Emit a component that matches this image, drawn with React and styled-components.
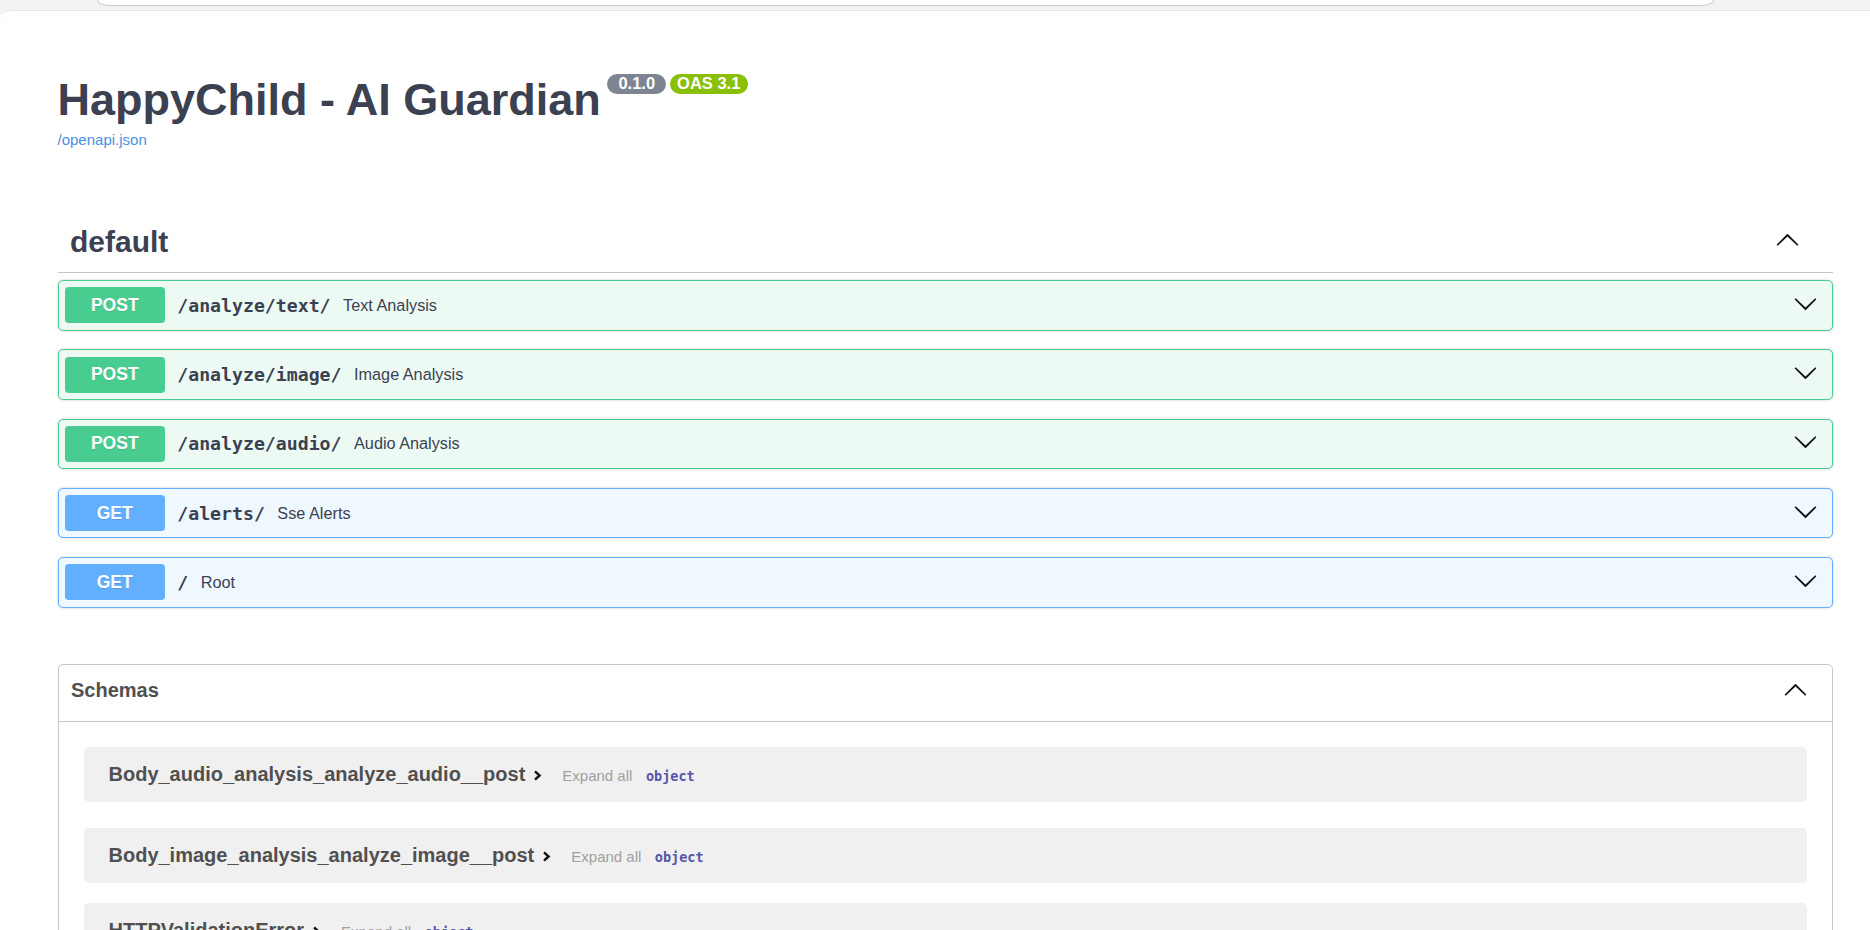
import React from 'react';
import styled, { createGlobalStyle } from 'styled-components';

const GlobalStyle = createGlobalStyle`
  html, body {
    margin: 0;
    padding: 0;
    overflow: hidden;
  }
  body {
    background: #f3f3f3;
    font-family: "Liberation Sans", Arial, sans-serif;
    color: #3b4151;
  }
  * { box-sizing: border-box; }
`;

const METHOD_COLORS = {
  POST: { main: '#49cc90', bg: '#edfaf4' },
  GET: { main: '#61affe', bg: '#eff7ff' },
};

const operations = [
  { method: 'POST', path: '/analyze/text/', summary: 'Text Analysis' },
  { method: 'POST', path: '/analyze/image/', summary: 'Image Analysis' },
  { method: 'POST', path: '/analyze/audio/', summary: 'Audio Analysis' },
  { method: 'GET', path: '/alerts/', summary: 'Sse Alerts' },
  { method: 'GET', path: '/', summary: 'Root' },
];

const schemas = [
  { name: 'Body_audio_analysis_analyze_audio__post', space: 25 },
  { name: 'Body_image_analysis_analyze_image__post', space: 25.5 },
  { name: 'HTTPValidationError', space: 19.5 },
  { name: 'ValidationError', space: 19.5 },
];

const Chevron = ({ up }) => (
  <ArrowIcon viewBox="0 0 20 20" $up={up}>
    <path d="M17.418 6.109c.272-.268.709-.268.979 0s.271.701 0 .969l-7.908 7.83c-.27.268-.707.268-.979 0l-7.908-7.83c-.27-.268-.27-.701 0-.969.271-.268.709-.268.979 0L10 13.25l7.418-7.141z" />
  </ArrowIcon>
);

const App = () => {
  return (
    <>
      <GlobalStyle />
      <TopStrip>
        <AddressBar />
      </TopStrip>
      <Page>
        <Wrapper>
          <TitleRow>
            <Title>HappyChild - AI Guardian</Title>
            <VersionBadge $bg="#7d8492" $gap={6.5} $pad={11}>0.1.0</VersionBadge>
            <VersionBadge $bg="#89bf04" $gap={3.5} $pad={7.5}>OAS 3.1</VersionBadge>
          </TitleRow>
          <SpecLink href="#">/openapi.json</SpecLink>

          <TagHeader>
            <TagName>default</TagName>
            <TagArrow>
              <Chevron up />
            </TagArrow>
          </TagHeader>

          <OpList>
            {operations.map((op) => (
              <Opblock key={op.method + op.path} $method={op.method}>
                <MethodBadge $method={op.method}>{op.method}</MethodBadge>
                <OpPath>{op.path}</OpPath>
                <OpSummary>{op.summary}</OpSummary>
                <OpArrow>
                  <Chevron />
                </OpArrow>
              </Opblock>
            ))}
          </OpList>

          <Models>
            <ModelsHeader>
              <ModelsTitle>Schemas</ModelsTitle>
              <Chevron up />
            </ModelsHeader>
            <ModelList>
              {schemas.map((s) => (
                <ModelRow key={s.name} $space={s.space}>
                  <ModelTitle>{s.name}</ModelTitle>
                  <ModelArrow viewBox="0 0 9 11">
                    <polyline points="2,1.3 6.6,5.5 2,9.7" />
                  </ModelArrow>
                  <ExpandAll>Expand all</ExpandAll>
                  <TypeName>object</TypeName>
                </ModelRow>
              ))}
            </ModelList>
          </Models>
        </Wrapper>
      </Page>
    </>
  );
};

export default App;

const TopStrip = styled.div`
  height: 10px;
  display: flex;
  align-items: flex-start;
`;

const AddressBar = styled.div`
  margin-left: 97px;
  width: 1617px;
  height: 6px;
  background: #fff;
  border: 1px solid #cdcdcd;
  border-top: none;
  border-radius: 0 0 12px 12px / 0 0 6px 6px;
`;

const Page = styled.div`
  background: #fff;
  border-top: 1px solid #e4e4e4;
  border-top-left-radius: 9px;
  min-height: calc(100vh - 10px);
`;

const Wrapper = styled.div`
  padding: 62.5px 37px 40px 57.5px;
`;

const TitleRow = styled.div`
  display: flex;
  align-items: flex-start;
`;

const Title = styled.h2`
  margin: 0;
  font-size: 45px;
  line-height: 52px;
  font-weight: 700;
  color: #3b4151;
`;

const VersionBadge = styled.span`
  margin-left: ${(p) => p.$gap}px;
  margin-top: 0.5px;
  padding: 0 ${(p) => p.$pad}px;
  height: 19.5px;
  line-height: 19.5px;
  border-radius: 57px;
  background: ${(p) => p.$bg};
  color: #fff;
  font-size: 16.5px;
  font-weight: 700;
`;

const SpecLink = styled.a`
  display: block;
  margin-top: 5px;
  font-size: 15px;
  line-height: 17px;
  color: #4990e2;
  text-decoration: none;
`;

const TagHeader = styled.div`
  margin-top: 64.5px;
  height: 61px;
  display: flex;
  align-items: center;
  justify-content: space-between;
  padding: 0 33px 0 12.5px;
  border-bottom: 1px solid #c4c6cb;
`;

const TagName = styled.h3`
  margin: 0;
  font-size: 30px;
  line-height: 34.5px;
  font-weight: 700;
  color: #3b4151;
`;

const TagArrow = styled.div`
  display: flex;
  margin-bottom: 4px;
`;

const ArrowIcon = styled.svg`
  width: 25px;
  height: 25px;
  fill: #111;
  flex-shrink: 0;
  transform: ${(p) => (p.$up ? 'rotate(180deg)' : 'none')};
`;

const OpList = styled.div`
  margin-top: 7px;
  display: flex;
  flex-direction: column;
  gap: 18.75px;
`;

const Opblock = styled.div`
  display: flex;
  align-items: center;
  padding: 6.25px;
  border: 1px solid ${(p) => METHOD_COLORS[p.$method].main};
  background: ${(p) => METHOD_COLORS[p.$method].bg};
  border-radius: 5px;
  box-shadow: 0 0 3px rgba(0, 0, 0, 0.19);
`;

const MethodBadge = styled.span`
  width: 100px;
  height: 36px;
  display: flex;
  align-items: center;
  justify-content: center;
  border-radius: 3.75px;
  background: ${(p) => METHOD_COLORS[p.$method].main};
  color: #fff;
  font-size: 17.5px;
  font-weight: 700;
  text-shadow: 0 1px 0 rgba(0, 0, 0, 0.1);
`;

const OpPath = styled.span`
  padding: 0 12.5px;
  font-family: "DejaVu Sans Mono", "Liberation Mono", monospace;
  font-size: 18.2px;
  font-weight: 700;
  color: #3b4151;
`;

const OpSummary = styled.span`
  flex: 1;
  font-size: 16.25px;
  color: #3b4151;
`;

const OpArrow = styled.div`
  display: flex;
  margin: 0 7.5px 4px 0;
`;

const Models = styled.section`
  margin-top: 56.25px;
  border: 1px solid #c4c6cb;
  border-radius: 5px;
`;

const ModelsHeader = styled.div`
  height: 57px;
  display: flex;
  align-items: center;
  justify-content: space-between;
  padding: 0 24.5px 5px 12.5px;
  border-bottom: 1px solid #c4c6cb;
`;

const ModelsTitle = styled.h4`
  margin: 0;
  font-size: 20px;
  line-height: 23px;
  font-weight: 700;
  color: #505050;
`;

const ModelList = styled.div`
  padding: 0 25px 25px;
`;

const ModelRow = styled.div`
  margin-top: ${(p) => p.$space}px;
  height: 55.5px;
  display: flex;
  align-items: baseline;
  padding: 16.5px 25px 0;
  background: #f0f0f0;
  border-radius: 5px;
`;

const ModelTitle = styled.span`
  font-size: 20px;
  line-height: 23px;
  font-weight: 700;
  color: #505050;
`;

const ModelArrow = styled.svg`
  width: 9px;
  height: 11px;
  margin-left: 8px;
  fill: none;
  stroke: #111;
  stroke-width: 2.4;
`;

const ExpandAll = styled.span`
  margin-left: 20px;
  font-size: 15px;
  color: #a0a0a0;
`;

const TypeName = styled.span`
  margin-left: 13.5px;
  font-family: "DejaVu Sans Mono", "Liberation Mono", monospace;
  font-size: 13.5px;
  font-weight: 700;
  color: #55a;
`;
